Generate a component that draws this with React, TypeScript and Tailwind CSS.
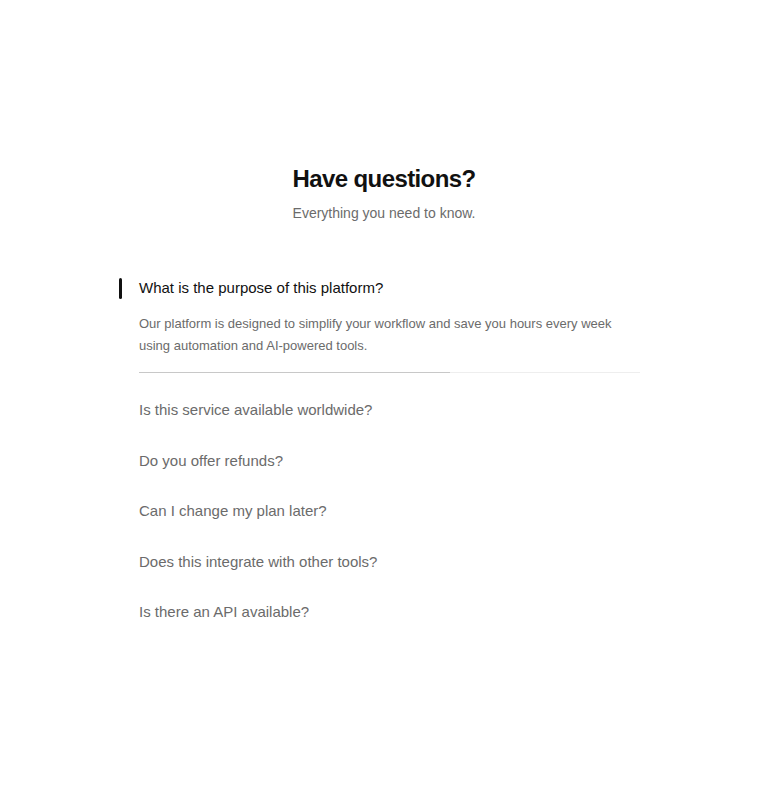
import { useState } from "react";

interface Faq {
  q: string;
  a: string;
}

const FAQS: Faq[] = [
  {
    q: "What is the purpose of this platform?",
    a: "Our platform is designed to simplify your workflow and save you hours every week using automation and AI-powered tools.",
  },
  { q: "Is this service available worldwide?", a: "Yes, we support customers in over 120 countries." },
  { q: "Do you offer refunds?", a: "We offer a 30-day money-back guarantee on all plans." },
  { q: "Can I change my plan later?", a: "You can upgrade or downgrade at any time from your settings." },
  { q: "Does this integrate with other tools?", a: "We integrate with the most popular apps you already use." },
  { q: "Is there an API available?", a: "Yes, a REST API is available on all paid plans." },
];

export default function App() {
  const [open, setOpen] = useState(0);

  return (
    <div
      className="min-h-screen bg-white flex flex-col justify-center"
      style={{ fontFamily: '"Liberation Sans", Arial, sans-serif' }}
    >
      <div className="w-[512px] mx-auto">
        <div className="text-center">
          <h2 className="text-2xl leading-8 font-bold tracking-tight text-[#111111]">Have questions?</h2>
          <p className="mt-2 text-sm leading-5 text-[#6b6b6b]">Everything you need to know.</p>
        </div>

        <div className="mt-10">
          {FAQS.map((f, i) => {
            const isOpen = i === open;
            return (
              <div key={f.q} className="relative pl-[11px] py-3">
                {isOpen && (
                  <span className="absolute left-[-9px] top-[15px] w-[3px] h-[21px] bg-[#111111] rounded-sm" />
                )}
                <button
                  onClick={() => setOpen(i)}
                  className={`block w-full text-left text-[15px] leading-[26.5px] ${
                    isOpen ? "text-[#111111]" : "text-[#6b6b6b]"
                  }`}
                >
                  {f.q}
                </button>
                {isOpen && (
                  <>
                    <p className="mt-3 text-[13px] leading-[22px] text-[#6b6b6b] pr-6">{f.a}</p>
                    <div className="mt-[15px] h-px bg-[#eeeeee]">
                      <div className="h-px w-[62%] bg-[#c8c8c8]" />
                    </div>
                  </>
                )}
              </div>
            );
          })}
        </div>
      </div>
    </div>
  );
}
